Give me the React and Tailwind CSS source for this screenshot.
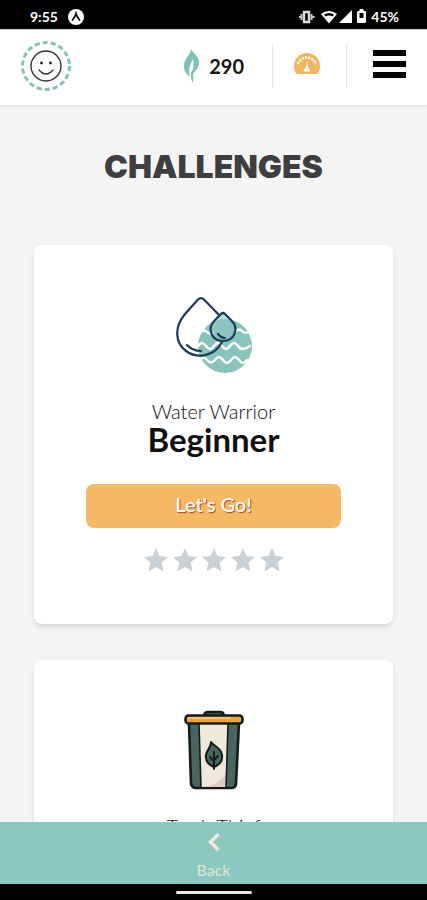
import React from 'react';

const challenges = [
  { id: 'water', name: 'Water Warrior', level: 'Beginner', icon: WaterIcon },
  { id: 'trash', name: 'Trash Thief', level: 'Beginner', icon: TrashIcon },
];

function WaterIcon() {
  return (
    <svg viewBox="0 0 76 76" className="w-[76px] h-20" fill="none" aria-hidden="true">
      <circle cx="49" cy="49" r="27" fill="#88c4bc" />
      {/* Waves */}
      <g stroke="#fff" strokeWidth="2.4" strokeLinecap="round" strokeLinejoin="round">
        <path d="M25 35q3-3 6 0t6 1M60 34q3-3 6 0t6 1" />
        <path d="M22 49q4-6 8 0t8 0q4-6 8 0t8 0q4-6 8 0t12 0" />
        <path d="M24 63q3-5 7 0t8 0q4-6 8 0t8 0q4-6 8 0t8 0" />
      </g>
      {/* Drops */}
      <path
        d="M43 18 28 2.500Q25-.5 22 2.500L9 17C-2 30-1 46 10 54c11 8 28 6 36-9"
        stroke="#1b3b5d"
        strokeWidth="2.2"
        strokeLinecap="round"
      />
      <path
        d="M45 17q2-2 4 0l6 6c9 9 3 21-8 21s-17-12-8-21z"
        fill="#88c4bc"
        fillOpacity="0.6"
        stroke="#1b3b5d"
        strokeWidth="2.2"
        strokeLinejoin="round"
      />
      <path d="M11 48q6 6 14 6M42 37q3 4 7 4" stroke="#1b3b5d" strokeWidth="2.2" strokeLinecap="round" />
    </svg>
  );
}

function TrashIcon() {
  return (
    <svg viewBox="0 0 60 80" className="w-[60px] h-20" strokeLinejoin="round" aria-hidden="true">
      <path d="M5 13h50l-3 61q-.5 4-5 4H12q-4 0-5-4z" fill="#47665e" stroke="#171c1b" strokeWidth="2.6" />
      <path d="M15 14h29l-2 63H17z" fill="#eee9da" />
      <path d="M42 64v13H19q14-1 23-13z" fill="#d8cdc9" />
      <path d="M15 14l2 64M44 14l-2 64" stroke="#171c1b" strokeWidth="1.6" />
      <path d="M20 6l1-3q1-1 3-1h12q2 0 3 1l1 3z" fill="#47665e" stroke="#171c1b" strokeWidth="2.6" />
      <rect x="1.500" y="5.500" width="57" height="8" rx="3" fill="#efa13f" stroke="#171c1b" strokeWidth="2.6" />
      <path d="M4 8h43" stroke="#f8c171" strokeWidth="2" />
      <path
        d="M27 32c2 4 10 5 11 13 1 7-3 10-8 12-5-2-9-5-8-12 1-6 5-7 5-13z"
        fill="#47665e"
        stroke="#171c1b"
        strokeWidth="2"
      />
      <path d="M30 42v17M30 51l-4-4M30 50l4-4" fill="none" stroke="#171c1b" strokeWidth="2" strokeLinecap="round" />
    </svg>
  );
}

function StatusBar() {
  return (
    <div className="h-[29px] shrink-0 bg-black text-white flex items-center justify-between pl-[30px] pr-7 pt-1 text-sm font-bold">
      <div className="flex items-center gap-[10px]">
        <span>9:55</span>
        <svg viewBox="0 0 16 16" className="w-4 h-4" aria-hidden="true">
          <circle cx="8" cy="8" r="8" fill="#fff" />
          <path d="M4.500 11Q7 8 8 4.500 9 8 11.500 11" fill="none" stroke="#111" strokeWidth="1.8" strokeLinecap="round" />
        </svg>
      </div>
      <div className="flex items-center">
        <svg viewBox="0 0 72 16" className="w-[72px] h-4" aria-hidden="true">
          {/* Vibrate */}
          <path d="M5 3h5v10H5z" fill="none" stroke="#ddd" strokeWidth="2.4" />
          <path d="M2.500 5v6M12.500 5v6M.500 7v2M14.500 7v2" stroke="#ccc" strokeWidth="2" />
          {/* Wifi */}
          <path d="M22 5q8-6 16 0l-8 9.500z" fill="#fff" />
          <path d="M25 5.500q5-3 10 0l-1.500 2q-3.500-2-7 0z" fill="#000" />
          {/* Signal */}
          <path d="M53 1v13H40z" fill="#fff" />
          {/* Battery */}
          <path d="M58 3q0-1 1-1h1.500V0h4v2H66q1 0 1 1v10q0 1-1 1h-7q-1 0-1-1z" fill="#fff" />
          <path d="M60.500 4h4v5h-4z" fill="#000" />
        </svg>
        <span>45%</span>
      </div>
    </div>
  );
}

function Header() {
  return (
    <header className="h-[76px] shrink-0 relative bg-white border-t border-gray-300 shadow flex items-center justify-between px-[21px]">
      <button type="button" aria-label="Profile" className="pb-1">
        <svg viewBox="0 0 50 50" className="w-[50px] h-[50px]" fill="none" aria-hidden="true">
          <circle cx="25" cy="25" r="23.500" stroke="#83c3b8" strokeWidth="3" strokeDasharray="5.2 3" />
          <circle cx="25" cy="25" r="15" stroke="#333" strokeWidth="1.4" />
          <path d="M18 29q7 8 14 0" stroke="#333" strokeWidth="1.4" strokeLinecap="round" />
          <circle cx="20.500" cy="22" r="1.4" fill="#222" />
          <circle cx="29.500" cy="22" r="1.4" fill="#222" />
        </svg>
      </button>
      <div className="flex items-center pb-1">
        <div className="flex items-center gap-2 pr-7">
          <svg viewBox="0 0 18 34" className="w-[18px] h-[34px]" aria-hidden="true">
            {/* Leaf, left and right halves round the vein */}
            <path d="M8 0C8 6 1 9 1 17c0 5 2 8 6 11-2-8 0-12 3-18 0-4 0-7-2-10z" fill="#7dc1b7" />
            <path d="M8 0c2 5 9 7 8 15-1 5-4 7-6 10 0 3 1 5 0 9-2-3-2-6-2-10 3-5 3-9 2-14z" fill="#7dc1b7" />
          </svg>
          <span className="text-xl font-bold text-[#161616]">290</span>
        </div>
        <div className="h-11 border-l border-gray-200" />
        <button type="button" aria-label="Dashboard" className="pl-[21px] pr-[26px] pb-1">
          <svg viewBox="0 0 26 22" className="w-[26px] h-[22px]" aria-hidden="true">
            <path d="M3 21Q0 18 0 13a13 13 0 0 1 26 0q0 5-3 8z" fill="#f5b55f" />
            <path d="M4 11a9.500 9.500 0 0 1 18 0" fill="none" stroke="#fff" strokeWidth="2.5" strokeDasharray="2 1.2" />
            <path d="M13 8l1.500 7q2 1 2 3.500h-7q0-2.500 2-3.500z" fill="#fff" />
          </svg>
        </button>
        <div className="h-11 border-l border-gray-200 mr-[26px]" />
        <button type="button" aria-label="Menu" className="w-[33px] flex flex-col gap-[5px] pb-1">
          <span className="h-[6px] bg-black" />
          <span className="h-[6px] bg-black" />
          <span className="h-[6px] bg-black" />
        </button>
      </div>
    </header>
  );
}

function Stars() {
  return (
    <div className="flex justify-center gap-[5px] mt-5" role="img" aria-label="0 out of 5 stars">
      {[1, 2, 3, 4, 5].map((star) => (
        <svg key={star} viewBox="0 0 24 24" className="w-6 h-6" fill="#c9d0d6">
          <path d="M12 0l3.500 8 8.500.9-6.400 5.700L19.500 23.500 12 19 4.500 23.500l1.900-8.900L0 8.900 8.500 8z" />
        </svg>
      ))}
    </div>
  );
}

function ChallengeCard({ challenge }) {
  return (
    <article className="bg-white rounded-lg shadow-md px-[52px] pt-[50px] pb-[52px] flex flex-col items-center text-center">
      <challenge.icon />
      <p className="mt-6 text-xl leading-6 font-light text-[#111]">{challenge.name}</p>
      <h2 className="text-[33px] leading-8 font-bold text-[#111]">{challenge.level}</h2>
      <button
        type="button"
        className="mt-[29px] w-full h-11 pb-1 rounded-lg bg-[#f5b963] text-white text-xl font-semibold text-shadow-[1px_1px_1px_#b5432a]"
      >
        Let's Go!
      </button>
      <Stars />
    </article>
  );
}

function App() {
  return (
    <div className="h-screen flex flex-col bg-[#f4f4f4] font-[Lato,sans-serif]">
      <StatusBar />
      <Header />

      <main className="flex-1 min-h-0 overflow-y-auto [scrollbar-width:none] px-[34px] pb-9">
        <h1 className="pt-[42px] pb-[58px] text-center text-[32px] leading-10 font-black font-[Inter,sans-serif] text-[#3e3e40]">
          CHALLENGES
        </h1>
        <div className="flex flex-col gap-9">
          {challenges.map((challenge) => (
            <ChallengeCard key={challenge.id} challenge={challenge} />
          ))}
        </div>
      </main>

      {/* Bottom bar */}
      <nav className="shrink-0 h-[62px] bg-[#8dc8c0] flex justify-center">
        <button type="button" className="flex flex-col items-center pt-[10px] text-[#dfe5d2] text-base">
          <svg viewBox="0 0 12 20" className="w-3 h-5 mb-[6px]" fill="none" aria-hidden="true">
            <path d="M10.500 2L2.500 10l8 8" stroke="#f2ead6" strokeWidth="3.5" />
          </svg>
          Back
        </button>
      </nav>
      <div className="shrink-0 h-4 bg-black flex items-center justify-center">
        <div className="w-[76px] h-[3px] rounded-full bg-[#e8e8e8]" />
      </div>
    </div>
  );
}

export default App;
